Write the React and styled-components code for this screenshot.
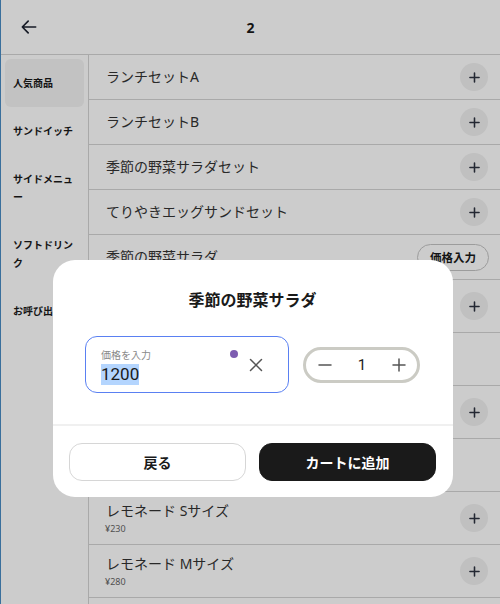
import React from 'react';
import styled, { createGlobalStyle } from 'styled-components';

const GlobalStyle = createGlobalStyle`
    html, body {
        margin: 0;
        padding: 0;
        background: #3a6f9c;
        overflow: hidden;
    }
    body {
        font-family: "Noto Sans", "Noto Sans CJK JP", sans-serif;
        color: #222;
    }
    * { box-sizing: border-box; }
`;

const Screen = styled.div`
    position: relative;
    margin-left: 1px;
    height: 604px;
    background: #fff;
    display: flex;
    flex-direction: column;
    overflow: hidden;
`;

const Header = styled.header`
    display: grid;
    grid-template-columns: 56px 1fr 56px;
    align-items: center;
    height: 55px;
    border-bottom: 1px solid #d4d4d4;
    flex-shrink: 0;
`;

const BackButton = styled.button`
    border: none;
    background: none;
    padding: 0 0 0 18px;
    display: flex;
    align-items: center;
    height: 100%;
    color: #1c2230;
`;

const Title = styled.h1`
    margin: 0;
    text-align: center;
    font-size: 14px;
    font-weight: 700;
    color: #1a1a1a;
`;

const Body = styled.div`
    display: flex;
    flex: 1;
    min-height: 0;
`;

const Sidebar = styled.nav`
    width: 88px;
    flex-shrink: 0;
    border-right: 1px solid #d4d4d4;
    padding: 4px 4px 0 4px;
`;

const SideItem = styled.div`
    padding: 15px 8px;
    font-size: 10px;
    font-weight: 700;
    line-height: 18px;
    border-radius: 6px;
    color: #1a1a1a;
    background: ${p => (p.active ? '#f3f3f3' : 'transparent')};
    white-space: ${p => (p.nowrap ? 'nowrap' : 'normal')};
`;

const List = styled.div`
    flex: 1;
    display: flex;
    flex-direction: column;
`;

const Row = styled.div`
    display: flex;
    align-items: center;
    justify-content: space-between;
    height: ${p => (p.tall ? '53px' : '45px')};
    padding: 0 12px 0 17px;
    border-bottom: 1px solid #d4d4d4;
    flex-shrink: 0;
`;

const RowText = styled.div`
    display: flex;
    flex-direction: column;
`;

const ItemName = styled.span`
    font-size: 14px;
    color: #333;
    line-height: 18px;
`;

const Price = styled.span`
    font-size: 9px;
    color: #666;
    margin-top: 2px;
    margin-left: -1px;
`;

const PlusCircle = styled.button`
    width: 28px;
    height: 28px;
    border-radius: 50%;
    border: none;
    background: #f1f1f1;
    display: flex;
    align-items: center;
    justify-content: center;
    padding: 0;
    color: #2d3340;
`;

const PriceButton = styled.button`
    height: 27px;
    padding: 0 12px;
    border: 1px solid #c4c4c4;
    border-radius: 14px;
    background: #fff;
    font-family: inherit;
    font-size: 11.5px;
    font-weight: 700;
    color: #1a1a1a;
    margin-right: -1px;
`;

const Overlay = styled.div`
    position: absolute;
    inset: 0;
    background: rgba(0, 0, 0, 0.2);
    display: flex;
    justify-content: center;
    align-items: flex-start;
    padding: 260px 0 0 5px;
`;

const Modal = styled.div`
    width: 400px;
    background: #fff;
    border-radius: 22px;
    display: flex;
    flex-direction: column;
    overflow: hidden;
`;

const ModalBody = styled.div`
    padding: 28px 33px 31px 32px;
    display: flex;
    flex-direction: column;
    align-items: center;
`;

const ModalTitle = styled.h2`
    margin: 0 0 24px;
    font-size: 16px;
    font-weight: 700;
    line-height: 24px;
    color: #1a1a1a;
`;

const Controls = styled.div`
    display: flex;
    align-items: center;
    gap: 14px;
    width: 100%;
`;

const PriceField = styled.div`
    position: relative;
    width: 204px;
    height: 57px;
    border: 1px solid #5a80f2;
    border-radius: 12px;
    padding: 11px 15px 0;
    display: flex;
    flex-direction: column;
`;

const FieldLabel = styled.span`
    font-size: 10px;
    color: #8a8a8a;
    line-height: 14px;
`;

const FieldValue = styled.span`
    font-family: "Roboto", "Noto Sans", sans-serif;
    font-size: 17px;
    line-height: 21px;
    color: #1a1a1a;
    align-self: flex-start;
    background: #b4d5fe;
    margin-top: 2px;
`;

const Dot = styled.span`
    position: absolute;
    top: 13px;
    left: 144px;
    width: 8px;
    height: 8px;
    border-radius: 50%;
    background: #7d5cb0;
`;

const ClearButton = styled.button`
    position: absolute;
    top: 21px;
    right: 25px;
    border: none;
    background: none;
    padding: 0;
    display: flex;
    color: #555;
`;

const Stepper = styled.div`
    width: 117px;
    height: 36px;
    border: 3px solid #cbcbc4;
    border-radius: 18px;
    display: flex;
    align-items: center;
    justify-content: space-between;
    padding: 0 11px 0 12px;
`;

const StepIcon = styled.span`
    display: flex;
    color: #555;
`;

const Count = styled.span`
    font-family: "Roboto", "Noto Sans", sans-serif;
    font-size: 15px;
    color: #222;
`;

const Divider = styled.div`
    height: 2px;
    background: #f0f0f0;
`;

const Footer = styled.div`
    display: grid;
    grid-template-columns: 1fr 1fr;
    gap: 13px;
    padding: 17px 17px 16px 16px;
`;

const ActionButton = styled.button`
    height: 38px;
    border-radius: 13px;
    font-family: inherit;
    font-size: 14px;
    font-weight: 700;
    border: 1px solid ${p => (p.primary ? '#1a1a1a' : '#d6d6d6')};
    background: ${p => (p.primary ? '#1a1a1a' : '#fff')};
    color: ${p => (p.primary ? '#fff' : '#1a1a1a')};
`;

const Plus = ({ size = 11, width = 1.7 }) => (
    <svg width={size} height={size} viewBox="0 0 12 12" fill="none" stroke="currentColor" strokeWidth={width} strokeLinecap="round">
        <path d="M6 1v10M1 6h10" />
    </svg>
);

const categories = [
    { name: '人気商品', active: true },
    { name: 'サンドイッチ' },
    { name: 'サイドメニュー' },
    { name: 'ソフトドリンク' },
    { name: 'お呼び出し', nowrap: true },
];

const items = [
    { name: 'ランチセットA', action: 'plus' },
    { name: 'ランチセットB', action: 'plus' },
    { name: '季節の野菜サラダセット', action: 'plus' },
    { name: 'てりやきエッグサンドセット', action: 'plus' },
    { name: '季節の野菜サラダ', action: 'price' },
    { name: 'ホットコーヒー', price: '¥300', action: 'plus' },
    { name: 'アイスコーヒー', price: '¥320' },
    { name: 'オレンジジュース', price: '¥250', action: 'plus' },
    { name: 'アイスティー', price: '¥250' },
    { name: 'レモネード Sサイズ', price: '¥230', action: 'plus' },
    { name: 'レモネード Mサイズ', price: '¥280', action: 'plus' },
    { name: 'レモネード Lサイズ', price: '¥330', action: 'plus' },
];

export default function App() {
    return (
        <>
            <GlobalStyle />
            <Screen>
                <Header>
                    <BackButton aria-label="戻る">
                        <svg width="20" height="20" viewBox="0 0 24 24" fill="none" stroke="currentColor" strokeWidth="2" strokeLinecap="round" strokeLinejoin="round">
                            <path d="M20 12H4M11 5l-7 7 7 7" />
                        </svg>
                    </BackButton>
                    <Title>2</Title>
                    <span />
                </Header>
                <Body>
                    <Sidebar>
                        {categories.map(c => (
                            <SideItem key={c.name} active={c.active} nowrap={c.nowrap}>
                                {c.name}
                            </SideItem>
                        ))}
                    </Sidebar>
                    <List>
                        {items.map(item => (
                            <Row key={item.name} tall={!!item.price}>
                                <RowText>
                                    <ItemName>{item.name}</ItemName>
                                    {item.price && <Price>{item.price}</Price>}
                                </RowText>
                                {item.action === 'plus' && (
                                    <PlusCircle aria-label="追加">
                                        <Plus />
                                    </PlusCircle>
                                )}
                                {item.action === 'price' && <PriceButton>価格入力</PriceButton>}
                            </Row>
                        ))}
                    </List>
                </Body>

                <Overlay>
                    <Modal>
                        <ModalBody>
                            <ModalTitle>季節の野菜サラダ</ModalTitle>
                            <Controls>
                                <PriceField>
                                    <FieldLabel>価格を入力</FieldLabel>
                                    <FieldValue>1200</FieldValue>
                                    <Dot />
                                    <ClearButton aria-label="クリア">
                                        <svg width="14" height="14" viewBox="0 0 14 14" fill="none" stroke="currentColor" strokeWidth="1.5" strokeLinecap="round">
                                            <path d="M1.5 1.5l11 11M12.5 1.5l-11 11" />
                                        </svg>
                                    </ClearButton>
                                </PriceField>
                                <Stepper>
                                    <StepIcon>
                                        <svg width="14" height="14" viewBox="0 0 14 14" fill="none" stroke="currentColor" strokeWidth="1.5" strokeLinecap="round">
                                            <path d="M1 7h12" />
                                        </svg>
                                    </StepIcon>
                                    <Count>1</Count>
                                    <StepIcon>
                                        <svg width="14" height="14" viewBox="0 0 14 14" fill="none" stroke="currentColor" strokeWidth="1.5" strokeLinecap="round">
                                            <path d="M7 1v12M1 7h12" />
                                        </svg>
                                    </StepIcon>
                                </Stepper>
                            </Controls>
                        </ModalBody>
                        <Divider />
                        <Footer>
                            <ActionButton>戻る</ActionButton>
                            <ActionButton primary>カートに追加</ActionButton>
                        </Footer>
                    </Modal>
                </Overlay>
            </Screen>
        </>
    );
}
